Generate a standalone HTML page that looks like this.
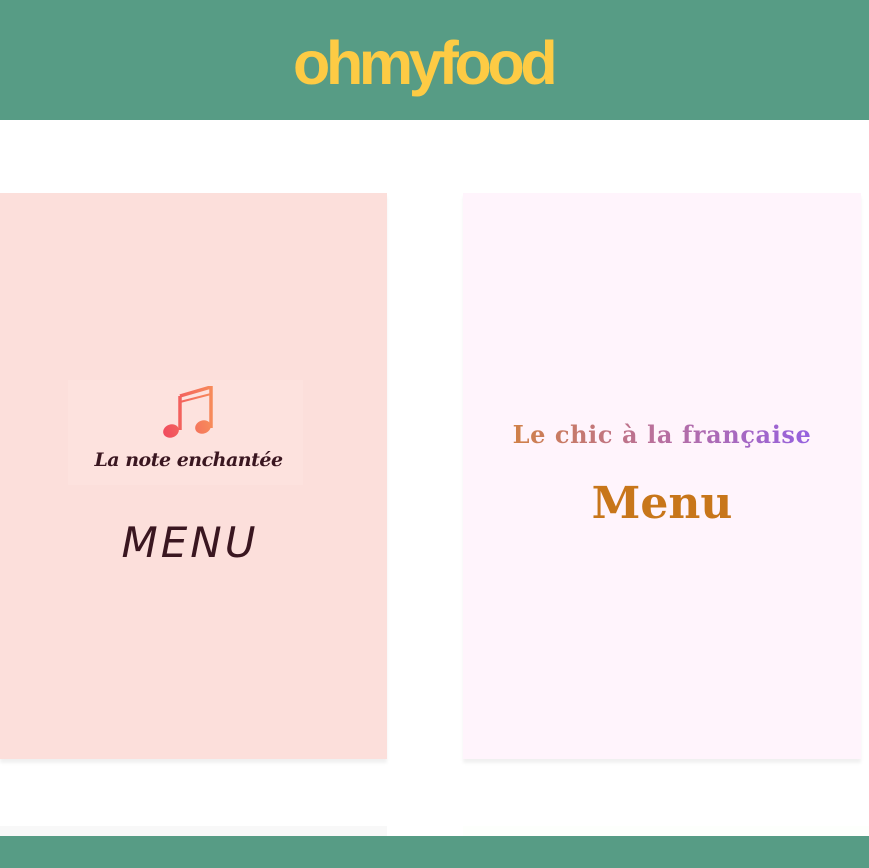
<!DOCTYPE html>
<html><head><meta charset="utf-8"><style>
*{margin:0;padding:0;box-sizing:border-box}
body{width:869px;height:868px;overflow:hidden;background:#fff;position:relative;font-family:"Liberation Sans",sans-serif}
.hdr{position:absolute;left:0;top:0;width:869px;height:120px;background:#579c85}
.logo{position:absolute;left:293px;top:28px;font-weight:bold;font-size:61px;letter-spacing:-4.3px;color:#fdcb44;line-height:70px}
.card{position:absolute;top:193px;height:566px;box-shadow:0 4px 3px rgba(0,0,0,0.06)}
.c1{left:0;width:387px;background:#fcdfdb}
.c2{left:463px;width:398px;background:#fff4fc}
.lbox{position:absolute;left:68px;top:187px;width:235px;height:105px;background:#fde2de}
.lname{position:absolute;left:0;width:377px;top:256px;text-align:center;font-family:"DejaVu Serif",serif;font-style:italic;font-weight:bold;font-size:19px;color:#3a1620;letter-spacing:-0.5px}
.lmenu{position:absolute;left:0;width:380px;top:325px;text-align:center;font-family:"DejaVu Sans",sans-serif;font-style:italic;font-size:42px;color:#3a1620;letter-spacing:3px}
.rname{position:absolute;left:0;width:398px;top:227px;text-align:center;font-family:"DejaVu Serif",serif;font-weight:bold;font-size:24px;letter-spacing:0.6px;background:linear-gradient(90deg,#d8862a,#b86fa0 50%,#8a5cf5);-webkit-background-clip:text;background-clip:text;color:transparent}
.rmenu{position:absolute;left:0;width:398px;top:285px;text-align:center;font-family:"DejaVu Serif",serif;font-weight:bold;font-size:44px;color:#c8761a}
.b1{position:absolute;left:0;top:826px;width:387px;height:10px;background:#f8f8f8}
.b2{position:absolute;left:463px;top:826px;width:406px;height:10px;background:#fdfffc}
.ftr{position:absolute;left:0;top:836px;width:869px;height:32px;background:#579c85}
</style></head><body>
<div class="hdr"><div class="logo">ohmyfood</div></div>
<div class="card c1">
<div class="lbox"></div>
<svg style="position:absolute;left:160px;top:193px" width="58" height="58" viewBox="0 0 58 58">
<defs><linearGradient id="g" gradientUnits="userSpaceOnUse" x1="0" y1="0" x2="58" y2="0"><stop offset="0" stop-color="#f0475f"/><stop offset="1" stop-color="#f8935a"/></linearGradient></defs>
<g fill="url(#g)" stroke="url(#g)">
<path d="M20 10 L51 1 L51 42" fill="none" stroke-width="3.5"/>
<path d="M20 10 L20 44" fill="none" stroke-width="3.5"/>
<path d="M20 16 L51 8" fill="none" stroke-width="2"/>
<ellipse cx="11" cy="45" rx="8" ry="6.5" transform="rotate(-20 11 45)" stroke="none"/>
<ellipse cx="43" cy="41" rx="8" ry="6.5" transform="rotate(-20 43 41)" stroke="none"/>
</g></svg>
<div class="lname">La note enchantée</div>
<div class="lmenu">MENU</div>
</div>
<div class="card c2">
<div class="rname">Le chic à la française</div>
<div class="rmenu">Menu</div>
</div>
<div class="b1"></div><div class="b2"></div>
<div class="ftr"></div>
</body></html>
